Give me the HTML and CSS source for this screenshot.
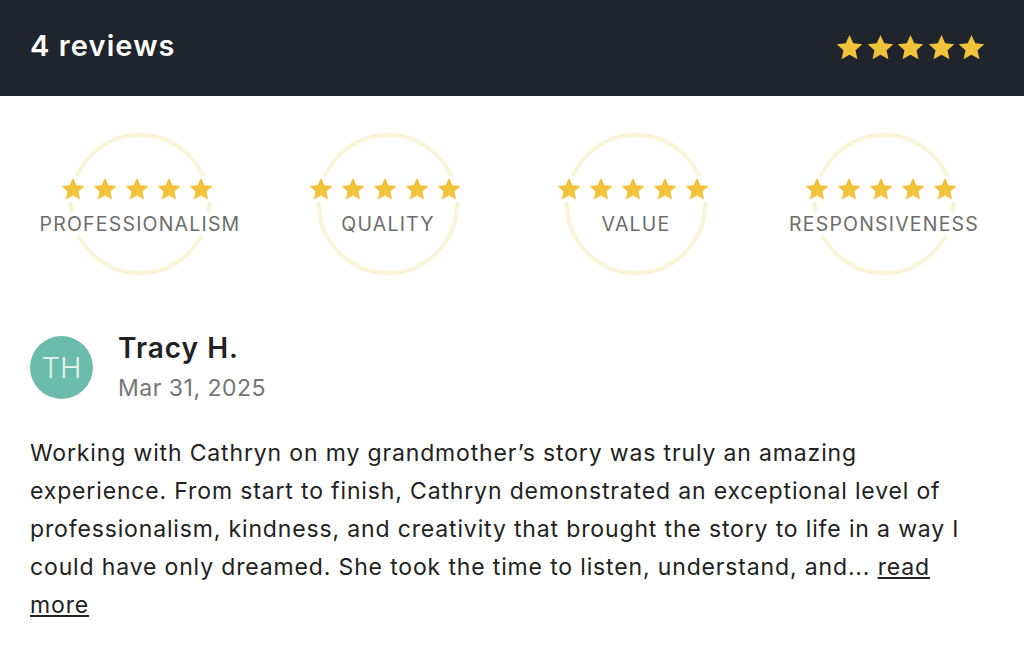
FILE: index.html
```html
<!DOCTYPE html>
<html>
<head>
<meta charset="utf-8">
<link rel="stylesheet" href="styles.css">
</head>
<body>
<svg width="0" height="0" class="defs">
  <defs>
    <symbol id="star" viewBox="0 0 24 24">
      <path d="M12 1.6l3.1 6.9 7.5.8-5.6 5 1.6 7.4L12 17.9l-6.6 3.8L7 14.3l-5.6-5 7.5-.8z"/>
    </symbol>
  </defs>
</svg>
<header class="top">
  <h1 class="count">4 reviews</h1>
  <div class="stars stars-lg">
    <svg><use href="#star"/></svg><svg><use href="#star"/></svg><svg><use href="#star"/></svg><svg><use href="#star"/></svg><svg><use href="#star"/></svg>
  </div>
</header>
<section class="ratings">
  <div class="rating">
    <div class="ring">
      <div class="stars stars-md"><svg><use href="#star"/></svg><svg><use href="#star"/></svg><svg><use href="#star"/></svg><svg><use href="#star"/></svg><svg><use href="#star"/></svg></div>
      <div class="label">PROFESSIONALISM</div>
    </div>
  </div>
  <div class="rating">
    <div class="ring">
      <div class="stars stars-md"><svg><use href="#star"/></svg><svg><use href="#star"/></svg><svg><use href="#star"/></svg><svg><use href="#star"/></svg><svg><use href="#star"/></svg></div>
      <div class="label">QUALITY</div>
    </div>
  </div>
  <div class="rating">
    <div class="ring">
      <div class="stars stars-md"><svg><use href="#star"/></svg><svg><use href="#star"/></svg><svg><use href="#star"/></svg><svg><use href="#star"/></svg><svg><use href="#star"/></svg></div>
      <div class="label">VALUE</div>
    </div>
  </div>
  <div class="rating">
    <div class="ring">
      <div class="stars stars-md"><svg><use href="#star"/></svg><svg><use href="#star"/></svg><svg><use href="#star"/></svg><svg><use href="#star"/></svg><svg><use href="#star"/></svg></div>
      <div class="label">RESPONSIVENESS</div>
    </div>
  </div>
</section>
<article class="review">
  <div class="author">
    <div class="avatar">TH</div>
    <div class="meta">
      <div class="name">Tracy H.</div>
      <div class="date">Mar 31, 2025</div>
    </div>
  </div>
  <p class="text">Working with Cathryn on my grandmother’s story was truly an amazing experience. From start to finish, Cathryn demonstrated an exceptional level of professionalism, kindness, and creativity that brought the story to life in a way I could have only dreamed. She took the time to listen, understand, and... <a href="#" class="more">read more</a></p>
</article>
</body>
</html>
```
FILE: styles.css
```css
* { box-sizing: border-box; }
html, body { margin: 0; padding: 0; background: #fff; }
body { font-family: Inter, "Open Sans", sans-serif; color: #222; width: 1024px; overflow: hidden; }
.defs { position: absolute; }

.top {
  height: 96px;
  background: #1f242d;
  display: flex;
  align-items: center;
  justify-content: space-between;
  padding: 0 38px 0 30px;
}
.count {
  margin: 0 0 6px;
  color: #fff;
  font-size: 29px;
  font-weight: 600;
  letter-spacing: 1.1px;
}
.stars { display: flex; }
.stars svg { fill: #f1c33a; }
.stars-lg { gap: 1.5px; margin-bottom: 2px; }
.stars-lg svg { width: 29px; height: 29px; }
.stars-md { gap: 6px; background: #fff; padding: 0 11px 0 4px; }
.stars-md svg { width: 26px; height: 26px; }

.ratings {
  display: grid;
  grid-template-columns: repeat(4, 248px);
  padding: 37px 16px 0;
}
.rating { display: flex; justify-content: center; }
.ring {
  width: 142px;
  height: 142px;
  border-radius: 50%;
  border: 4px solid #f8f5db;
  box-shadow: 0 0 2px #fbf8e6, inset 0 0 2px #fbf8e6;
  display: flex;
  flex-direction: column;
  align-items: center;
  justify-content: center;
  gap: 10px;
  padding-top: 4px;
}
.label {
  font-size: 19.5px;
  color: #6d6d6d;
  white-space: nowrap;
  letter-spacing: 1.2px;
  background: #fff;
  padding: 0 4px;
}

.review { padding: 52px 30px 0; }
.author { display: flex; align-items: center; gap: 25px; }
.avatar {
  width: 63px;
  height: 63px;
  border-radius: 50%;
  background: #6cbcab;
  color: #e3f4ef;
  font-size: 29px;
  font-weight: 300;
  display: flex;
  align-items: center;
  justify-content: center;
  margin-top: -2px;
}
.meta { display: flex; flex-direction: column; }
.name { font-size: 28px; font-weight: 600; color: #202124; line-height: 38px; margin-top: 2px; letter-spacing: 1px; }
.date { font-size: 23px; color: #757575; line-height: 42px; letter-spacing: 0.5px; }
.text {
  margin: 25px 0 0;
  font-size: 23px;
  line-height: 38px;
  color: #222;
  width: 955px;
  letter-spacing: 0.85px;
}
.more { color: #222; text-decoration: underline; }
```
